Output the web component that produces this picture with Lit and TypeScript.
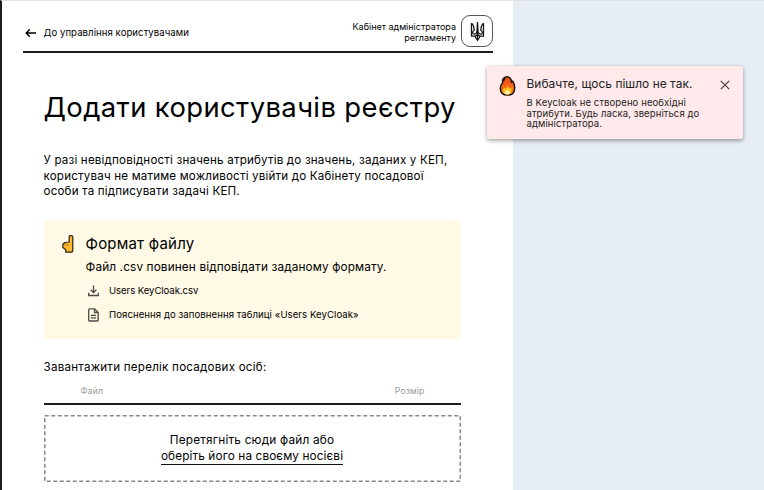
import { LitElement, html, css, svg } from 'lit';

const arrow = html`<svg class="arrow" width="12" height="10" viewBox="0 0 12 10" fill="none" stroke="#000" stroke-width="1.4"><path d="M11 5H1.2M4.800 1.300L1.200 5l3.600 3.700"/></svg>`;

const trident = html`<svg width="15" height="21" viewBox="0 0 14 21" fill="none" stroke="#151515" stroke-width="1.3">
  <path d="M1 2.200v13h3.600c.3 1.700 1 2.700 2.400 4.200 1.400-1.500 2.100-2.500 2.400-4.200H13v-13"/>
  <path d="M1 2.200c2.200 2 2.700 4.200 2.600 7.300-1 .3-1.500 1-1.500 1.900 0 1 .7 1.700 1.700 1.700 1.700 0 2.800-1.500 2.800-4L7 1l.4 8.100c0 2.500 1.100 4 2.800 4 1 0 1.700-.7 1.700-1.700 0-.9-.5-1.600-1.500-1.900-.1-3.100.4-5.300 2.600-7.300"/>
  <path d="M7 9v10M4.600 15.200c1.500-.3 2.200-1.200 2.400-2.500.2 1.300.9 2.200 2.400 2.500"/>
</svg>`;

const hand = html`<svg class="hand" width="12" height="18" viewBox="0 0 12 18">
  <path d="M7.200 7V1.600c0-1.300 3.600-1.300 3.600 0v14.200c0 .9-.6 1.400-1.400 1.400H3.800v-2.400L.9 12.600V9.200l1.900-1.700z" fill="#fcb82a" stroke="#26221d" stroke-width="1.200" stroke-linejoin="round"/>
  <path d="M1.500 10.300h4.800M3.400 8v2.200M5.300 7.600v2.600" stroke="#b97a1a" stroke-width=".6" fill="none"/>
</svg>`;

const fire = html`<svg class="fire" width="17" height="22" viewBox="0 0 18 22">
  <defs><linearGradient id="flame" x1="0" y1="0" x2="0" y2="1"><stop offset=".3" stop-color="#ee5716"/><stop offset="1" stop-color="#fb8c1c"/></linearGradient></defs>
  <path d="M8 1.100c4 .3 5.200 3 5.100 5.900l1.500-1.200c1.700 2.500 2.300 5.400 2 8.200-.4 4.300-3.400 6.700-7.500 6.700-4.500 0-7.500-2.600-7.700-6.900-.1-2.600.9-4.600 2.500-6.700C3.300 4.600 4.500 1.800 8 1.100z" fill="url(#flame)" stroke="#17110e" stroke-width="1.500" stroke-linejoin="round"/>
  <path d="M3 6.500C2.900 3 5 1.300 7.700 1.500 6.700 2.800 6.800 4.300 5.600 5.600z" fill="#2b1711"/>
  <path d="M4.300 15.700c0-1 .6-2 1.200-2.600l1.700 1.200 2.300-3.300c.9 1.200 1 2 1.200 2.900l1.900-1.100c1.400 4.300-.2 7.100-3.700 7.100-2.900 0-4.600-1.700-4.600-4.200z" fill="#ffc71e"/>
  <path d="M5.900 17.700l3-2.400 2.700 2.400c0 1.500-1.100 2.200-2.700 2.200s-3-.8-3-2.200z" fill="#fff4b5"/>
</svg>`;

const download = html`<svg width="11" height="12" viewBox="0 0 11 12" fill="none" stroke="#4c4a45" stroke-width="1.300"><path d="M5.500.5v7M2.600 4.700l2.900 2.900 2.900-2.900M.7 7.800v2.700h9.600V7.800"/></svg>`;

const doc = html`<svg width="11" height="14" viewBox="0 0 11 14" fill="none" stroke="#4c4a45" stroke-width="1.300"><path d="M1.600.9h5l3.600 3.500v7.700c0 .5-.4.900-.9.900H1.600c-.5 0-.9-.4-.9-.9V1.800c0-.5.4-.9.900-.9z"/><path d="M6.500 1v3.500h3.600M2.900 7.300h5.200M2.900 9.900h5.200"/></svg>`;

const close = html`<svg class="close" width="10" height="10" viewBox="0 0 10 10" stroke="#454042" stroke-width="1.200"><path d="M.8.8l8.400 8.400M9.200.8L.8 9.200"/></svg>`;

class AppRoot extends LitElement {
  static styles = css`
    :host { display: block; }
    * { box-sizing: border-box; margin: 0; }
    svg { display: block; flex: none; }
    .page { position: relative; height: 490px; overflow: hidden; background: #e6edf4; color: #000;
      border-top: 1px solid #e3e3e4; border-left: 2px solid #1c1c1f; font-family: Inter, "Noto Sans", sans-serif; white-space: nowrap; }
    .panel { width: 511.400px; height: 490px; background: #fff; padding: 0 20.400px 0 21px; }
    header { display: flex; justify-content: space-between; align-items: center; height: 52px; padding-top: 13px; border-bottom: 2px solid #1c1c1f; }
    .back { display: flex; align-items: center; gap: 7px; padding-left: 2px; font-size: 9.600px; letter-spacing: .055px; }
    .back span { margin-left: -.5px; }
    .cab { display: flex; align-items: center; gap: 5px; font-size: 9px; line-height: 10.600px; text-align: right; }
    .logo { width: 32px; height: 32px; margin-top: -3px; border: 1px solid #555; border-radius: 9px; display: grid; place-items: center; }
    main { width: 417px; margin-left: 20.500px; }
    h1 { font-weight: 440; font-size: 27.400px; letter-spacing: .4px; line-height: 36px; margin-top: 36px; }
    .text { font-size: 11.600px; letter-spacing: .185px; line-height: 15.500px; margin-top: 28px; }
    .info { display: flex; gap: 12px; height: 119px; margin-top: 20px; padding: 15px 18px; background: #fff9e5; }
    .info h2 { font-weight: 400; font-size: 15px; letter-spacing: .21px; line-height: 18px; }
    .info p { font-size: 11.800px; letter-spacing: .13px; line-height: 16px; margin-top: 6px; }
    .links { padding: 4px 0 0 2px; }
    .link { display: flex; align-items: center; gap: 10.500px; height: 24px; font-size: 9.600px; letter-spacing: .06px; }
    .tight { letter-spacing: -.07px; }
    .label { font-size: 11.600px; letter-spacing: .235px; line-height: 16px; margin-top: 20px; }
    .cols { display: flex; justify-content: space-between; height: 30px; padding: 11px 36px 0 37px; border-bottom: 2px solid #1c1c1f; color: #999; font-size: 8.600px; line-height: 10px; letter-spacing: .15px; }
    .drop { position: relative; margin-top: 10px; height: 67px; display: flex; flex-direction: column; align-items: center; padding-top: 17px; font-size: 11.800px; letter-spacing: .19px; line-height: 16px; }
    .dash { position: absolute; inset: 0; }
    .pick { letter-spacing: .11px; border-bottom: 1.500px solid #111; }
    .toast { position: absolute; left: 485px; top: 65px; width: 256px; height: 73px; padding: 9px 13.500px 0 12px; display: flex; background: #ffe9ea; border-radius: 2px; box-shadow: 0 2px 4px rgba(0,0,0,.3), 0 0 3px rgba(0,0,0,.12); color: #222; }
    .msg { flex: 1; margin-left: 10.500px; }
    .msg h3 { font-weight: 400; font-size: 11.900px; letter-spacing: .05px; line-height: 18px; }
    .msg p { font-size: 9.500px; letter-spacing: .1px; line-height: 10.500px; margin-top: 5px; }
    .close { margin-top: 5px; }
  `;
  render() {
    return html`<div class="page">
      <div class="panel">
        <header>
          <div class="back">${arrow}<span>До управління користувачами</span></div>
          <div class="cab"><span>Кабінет адміністратора<br>регламенту</span><div class="logo">${trident}</div></div>
        </header>
        <main>
          <h1>Додати користувачів реєстру</h1>
          <p class="text">У разі невідповідності значень атрибутів до значень, заданих у КЕП,<br>користувач не матиме можливості увійти до Кабінету посадової<br>особи та підписувати задачі КЕП.</p>
          <section class="info">${hand}
            <div>
              <h2>Формат файлу</h2>
              <p>Файл .csv повинен відповідати заданому формату.</p>
              <div class="links">
                <div class="link tight">${download}<span>Users KeyCloak.csv</span></div>
                <div class="link">${doc}<span>Пояснення до заповнення таблиці «Users KeyCloak»</span></div>
              </div>
            </div>
          </section>
          <p class="label">Завантажити перелік посадових осіб:</p>
          <div class="cols"><span>Файл</span><span>Розмір</span></div>
          <div class="drop">
            <svg class="dash" width="417" height="67" fill="none" stroke="#888" stroke-width="1.500" stroke-dasharray="4 2.500">${svg`<rect x=".75" y=".75" width="415.500" height="65.500"/>`}</svg>
            <span>Перетягніть сюди файл або</span><span class="pick">оберіть його на своєму носієві</span>
          </div>
        </main>
      </div>
      <aside class="toast">${fire}
        <div class="msg"><h3>Вибачте, щось пішло не так.</h3>
          <p>В Keycloak не створено необхідні<br>атрибути. Будь ласка, зверніться до<br>адміністратора.</p></div>
        ${close}
      </aside>
    </div>`;
  }
}
customElements.define('app-root', AppRoot);
